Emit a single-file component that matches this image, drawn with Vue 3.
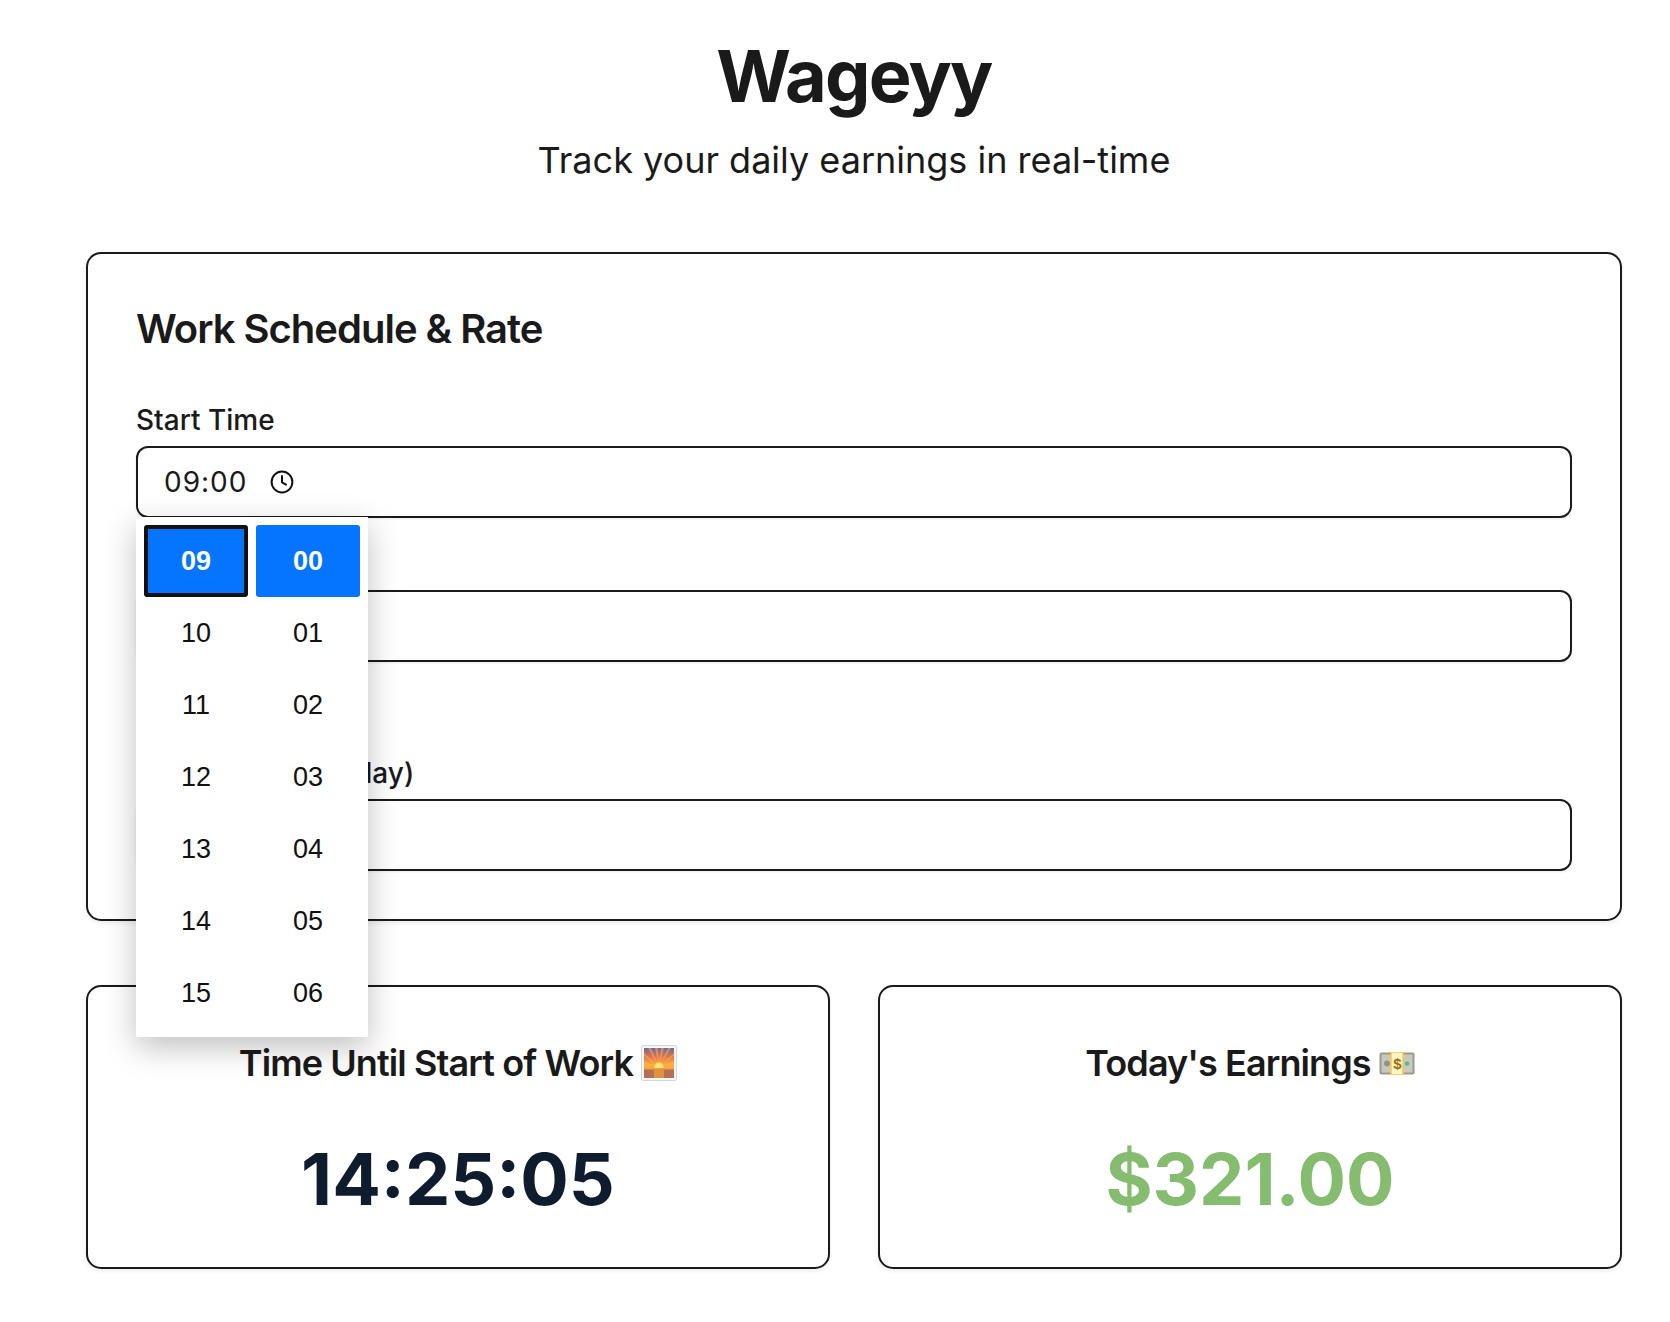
<template>
  <main class="page">
    <header class="page-header">
      <h1 class="app-title">Wageyy</h1>
      <p class="app-subtitle">Track your daily earnings in real-time</p>
    </header>

    <section class="card schedule-card">
      <h2 class="card-title">Work Schedule &amp; Rate</h2>

      <div class="field start-field">
        <label class="field-label">Start Time</label>
        <div class="field-input">
          <span class="time-value">09:00</span>
          <svg class="clock-icon" viewBox="0 0 24 24" fill="none" stroke="#111" stroke-width="2" stroke-linecap="round" stroke-linejoin="round">
            <circle cx="12" cy="12" r="10.4" />
            <path d="M12 6v6.4l4 2.2" />
          </svg>
        </div>

        <div class="time-picker">
          <div v-for="col in columns" :key="col.name" class="picker-col">
            <div
              v-for="(val, i) in col.values"
              :key="val"
              class="picker-cell"
              :class="{ selected: i === 0, focused: i === 0 && col.name === 'hours' }"
            >{{ val }}</div>
          </div>
        </div>
      </div>

      <div class="field end-field">
        <label class="field-label">End Time</label>
        <div class="field-input"></div>
      </div>

      <div class="field">
        <label class="field-label">Daily Income ($/day)</label>
        <div class="field-input"></div>
      </div>
    </section>

    <section class="stats">
      <div class="card stat-card">
        <h3 class="stat-title">
          Time Until Start of Work
          <svg class="emoji sunrise" viewBox="0 0 36 36">
            <defs>
              <linearGradient id="sky" x1="0" y1="0" x2="0" y2="1">
                <stop offset="0" stop-color="#6b6a98" />
                <stop offset="0.4" stop-color="#e0734f" />
                <stop offset="0.8" stop-color="#fdab3d" />
              </linearGradient>
            </defs>
            <rect x="0.5" y="0.5" width="35" height="35" rx="1.5" fill="#f4f7f8" stroke="#cfd8dc" />
            <rect x="3" y="3" width="30" height="21" fill="url(#sky)" />
            <path d="M18 22 7 3h3zM18 22 14 3h3zM18 22 20 3h3zM18 22 27 3h3zM18 22 3 8v3zM18 22 33 8v3zM18 22 3 16v3zM18 22 33 16v3z" fill="#fdb45c" opacity="0.5" />
            <circle cx="18" cy="22" r="4.500" fill="#ffe27a" />
            <rect x="3" y="23" width="30" height="10" fill="#b56f55" />
            <rect x="3" y="23" width="30" height="1.500" fill="#f6a13e" />
            <rect x="13" y="24" width="10" height="9" fill="#e0913f" />
          </svg>
        </h3>
        <div class="stat-value">14:25:05</div>
      </div>

      <div class="card stat-card">
        <h3 class="stat-title">
          Today's Earnings
          <svg class="emoji money" viewBox="0 0 36 23">
            <rect x="0.5" y="0.5" width="35" height="22" rx="2" fill="#979c8c" />
            <rect x="2.500" y="2.500" width="31" height="18" fill="#c6c9bb" />
            <circle cx="8" cy="11.500" r="3" fill="#8f9484" />
            <circle cx="28" cy="11.500" r="2.200" fill="#5fb191" />
            <rect x="12" y="0" width="12" height="23" fill="#fdf3c4" stroke="#f7c948" stroke-width="1.500" />
            <text x="18" y="17" class="emoji-dollar">$</text>
          </svg>
        </h3>
        <div class="stat-value">
          <span class="earnings">$321.00</span>
        </div>
      </div>
    </section>
  </main>
</template>

<script setup>
const pad = (n) => String(n).padStart(2, '0')

const columns = [
  { name: 'hours', values: [9, 10, 11, 12, 13, 14, 15].map(pad) },
  { name: 'minutes', values: [0, 1, 2, 3, 4, 5, 6].map(pad) }
]
</script>

<style>
html,
body {
  margin: 0;
  background: #fff;
}
</style>

<style scoped>
.page {
  box-sizing: border-box;
  width: 1670px;
  padding: 34px 48px 52px 86px;
  font-family: Inter, "Liberation Sans", sans-serif;
  color: #1a1a1a;
}

.page-header {
  text-align: center;
  margin-bottom: 69px;
}

.app-title {
  margin: 0;
  font-size: 72px;
  line-height: 84px;
  font-weight: 700;
  letter-spacing: -1.8px;
}

.app-subtitle {
  margin: 19px 0 0;
  font-size: 36px;
  line-height: 46px;
  font-weight: 400;
}

.card {
  box-sizing: border-box;
  background: #fff;
  border: 2px solid #1a1a1a;
  border-radius: 15px;
  box-shadow: 0 2px 5px rgba(0, 0, 0, 0.08);
}

.schedule-card {
  height: 669px;
  padding: 51px 48px 48px;
}

.card-title {
  margin: 0 0 48px;
  font-size: 40px;
  line-height: 48px;
  font-weight: 600;
  letter-spacing: -1px;
}

.field {
  position: relative;
}

.start-field {
  margin-bottom: 27px;
}

.end-field {
  margin-bottom: 92px;
}

.field-label {
  display: block;
  height: 45px;
  line-height: 38px;
  font-size: 28px;
  font-weight: 500;
}

.field-input {
  box-sizing: border-box;
  display: flex;
  align-items: center;
  height: 72px;
  padding: 0 26px;
  border: 2px solid #1a1a1a;
  border-radius: 12px;
  background: #fff;
  box-shadow: 0 1px 3px rgba(0, 0, 0, 0.08);
}

.time-value {
  font-size: 28px;
  letter-spacing: 1px;
}

.clock-icon {
  width: 24px;
  height: 24px;
  margin-left: 23px;
}

.time-picker {
  position: absolute;
  top: 116px;
  left: 0;
  z-index: 5;
  display: flex;
  gap: 8px;
  padding: 8px;
  background: #fff;
  box-shadow: 0 10px 30px rgba(0, 0, 0, 0.25);
  font-family: "Liberation Sans", Arial, sans-serif;
}

.picker-col {
  width: 104px;
}

.picker-cell {
  box-sizing: border-box;
  height: 72px;
  line-height: 72px;
  text-align: center;
  font-size: 27px;
  color: #111;
}

.picker-cell.selected {
  background: #0574ff;
  border-radius: 3px;
  color: #fff;
  font-weight: 700;
}

.picker-cell.focused {
  line-height: 64px;
  border: 4px solid #111;
}

.stats {
  display: grid;
  grid-template-columns: 1fr 1fr;
  gap: 48px;
  margin-top: 64px;
}

.stat-card {
  height: 284px;
  text-align: center;
  padding-top: 53px;
}

.stat-title {
  display: flex;
  justify-content: center;
  align-items: center;
  gap: 8px;
  margin: 0;
  height: 46px;
  font-size: 36px;
  font-weight: 600;
  letter-spacing: -0.9px;
}

.emoji {
  flex: none;
  width: 36px;
}

.sunrise {
  height: 36px;
}

.money {
  height: 23px;
}

.emoji-dollar {
  font-family: "Liberation Sans", sans-serif;
  font-size: 15px;
  font-weight: 700;
  text-anchor: middle;
  fill: #9a6b12;
}

.stat-value {
  margin-top: 49px;
  font-size: 72px;
  line-height: 88px;
  font-weight: 700;
  color: #0f1c2e;
}

.earnings {
  color: #86bc6f;
}
</style>
